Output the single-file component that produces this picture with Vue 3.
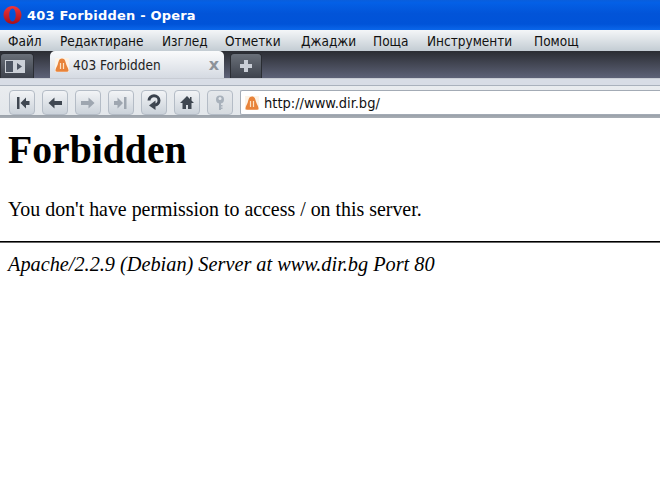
<script setup>
const menus = [
  { label: 'Файл', width: 52 },
  { label: 'Редактиране', width: 102 },
  { label: 'Изглед', width: 63 },
  { label: 'Отметки', width: 76 },
  { label: 'Джаджи', width: 72 },
  { label: 'Поща', width: 54 },
  { label: 'Инструменти', width: 107 },
  { label: 'Помощ', width: 70 },
];

const navButtons = [
  { name: 'rewind', path: 'M6 5h2.500v12H6zM9.500 11 15 5.500V9h3.500v4H15v3.500z', off: false },
  { name: 'back', path: 'M4.500 11 10.500 5.500V9H18v4h-7.500v3.500z', off: false },
  { name: 'forward', path: 'M17.500 11 11.500 5.500V9H4v4h7.500v3.500z', off: true },
  { name: 'fastforward', path: 'M14 5h2.500v12H14zM13 11 7.500 5.500V9H4v4h3.500v3.500z', off: true },
];

const warnDome = 'M7 .5C4 .5 3.600 3.500 2.800 6.300 2 8.800 .5 10.300 .5 12.500c0 .8.500 1.200 1.200 1.200h10.600c.7 0 1.200-.4 1.200-1.200 0-2.200-1.500-3.700-2.300-6.200C10.400 3.500 10 .5 7 .5z';
</script>

<template>
  <div class="browser">
    <header class="title-bar">
      <svg class="logo" width="22" height="22" viewBox="0 0 22 22">
        <defs>
          <linearGradient id="opera-red" x1="0" y1="0" x2="0" y2="1">
            <stop offset="0" stop-color="#f0353a" />
            <stop offset="1" stop-color="#a80f18" />
          </linearGradient>
        </defs>
        <path fill-rule="evenodd" fill="url(#opera-red)" d="M9.500 2C4.500 2 .5 6 .5 11s4 9 9 9 9-4 9-9-4-9-9-9zm0 2.500c2 0 3.200 3 3.200 6.500s-1.200 6.500-3.200 6.500S6.300 14.500 6.300 11s1.200-6.500 3.200-6.500z" />
      </svg>
      <span class="title-text">403 Forbidden - Opera</span>
    </header>

    <nav class="menu-bar">
      <span v-for="item in menus" :key="item.label" class="menu-item" :style="{ width: item.width + 'px' }">{{ item.label }}</span>
    </nav>

    <div class="tab-bar">
      <button class="tab-dark panel-btn">
        <svg width="20" height="13" viewBox="0 0 20 13">
          <rect width="20" height="13" fill="#ccd1d8" />
          <rect x="1" y="1" width="7" height="11" fill="#4d5562" />
          <path d="M12 3 17 6.500 12 10z" fill="#4d5562" />
        </svg>
      </button>
      <div class="tab">
        <svg width="14" height="14" viewBox="0 0 14 14">
          <rect width="14" height="14" fill="#fdf3e6" />
          <path :d="warnDome" fill="#e8833a" />
          <path d="M5.500 5v6M8.500 5v6" stroke="#fde3c4" stroke-width="1.200" />
        </svg>
        <span class="tab-label">403 Forbidden</span>
        <span class="tab-close">x</span>
      </div>
      <button class="tab-dark new-tab">
        <svg width="14" height="14" viewBox="0 0 14 14">
          <path d="M5 1h4v4h4v4H9v4H5V9H1V5h4z" fill="#c9ced6" />
        </svg>
      </button>
    </div>

    <div class="tool-bar">
      <button v-for="btn in navButtons" :key="btn.name" class="nav-btn" :class="{ off: btn.off }">
        <svg width="22" height="22" viewBox="0 0 22 22"><path :d="btn.path" /></svg>
      </button>
      <button class="nav-btn reload">
        <svg width="22" height="22" viewBox="0 0 22 22">
          <path class="ring" d="M6 8.500C6 5.500 8.500 3.800 11 3.800s5 1.700 5 4.700c0 2.500-2 4.300-4 4.500" />
          <path d="M12.500 8.500v9.500L6 13.500z" />
        </svg>
      </button>
      <button class="nav-btn home">
        <svg width="22" height="22" viewBox="0 0 22 22">
          <path d="M11 4 4 11h2.500v6H10v-4h2v4h3.500v-6H18l-2.500-2.500V5H14v2z" />
        </svg>
      </button>
      <button class="nav-btn key">
        <svg width="22" height="22" viewBox="0 0 22 22">
          <circle cx="11" cy="7.500" r="4" fill="#a8b1bb" />
          <circle cx="11" cy="6.500" r="1.500" fill="#e4e8ec" />
          <path d="M10 10h2v8h-2zM12 13h1.500v1.500H12zM12 15.500h1.500V17H12z" />
        </svg>
      </button>
      <div class="address">
        <svg width="14" height="14" viewBox="0 0 14 14">
          <rect width="14" height="14" fill="#fdf3e6" />
          <path :d="warnDome" fill="#e8833a" />
          <path d="M5.500 5v6M8.500 5v6" stroke="#fde3c4" stroke-width="1.200" />
        </svg>
        <span class="url">http://www.dir.bg/</span>
      </div>
    </div>

    <main class="page">
      <h1>Forbidden</h1>
      <p>You don't have permission to access / on this server.</p>
      <hr />
      <address>Apache/2.2.9 (Debian) Server at www.dir.bg Port 80</address>
    </main>
  </div>
</template>

<style>
html, body {
  margin: 0;
  background: #fff;
  overflow: hidden;
}
</style>

<style scoped>
.browser {
  width: 660px;
  height: 496px;
  overflow: hidden;
  background: #fff;
  display: flex;
  flex-direction: column;
}

.title-bar {
  height: 30px;
  flex: none;
  box-sizing: border-box;
  padding-left: 3px;
  display: flex;
  align-items: center;
  gap: 2px;
  background: linear-gradient(#0a5edc 0, #0460e6 8%, #0254d8 45%, #0053d8 80%, #0a66ea 100%);
}

.title-text {
  color: #fff;
  font: bold 13px "DejaVu Sans", sans-serif;
  letter-spacing: 0.2px;
}

.menu-bar {
  height: 21px;
  flex: none;
  box-sizing: border-box;
  padding-left: 8px;
  display: flex;
  align-items: center;
  background: linear-gradient(#f4f6f8, #c3ccd3);
}

.menu-item {
  font: 13.500px "DejaVu Sans Condensed", "DejaVu Sans", sans-serif;
  font-stretch: condensed;
  color: #111;
  white-space: nowrap;
}

.tab-bar {
  height: 28px;
  flex: none;
  box-sizing: border-box;
  display: flex;
  align-items: flex-end;
  background: linear-gradient(#2b2d33, #5d6277);
  border-bottom: 1px solid #c8ccd4;
}

.tab-dark {
  height: 25px;
  padding: 0;
  border: 1px solid #2a2d33;
  border-bottom: 0;
  border-radius: 4px 4px 0 0;
  background: linear-gradient(#6a7079, #3d424c);
  display: flex;
  align-items: center;
  justify-content: center;
}

.panel-btn {
  width: 34px;
  margin-right: 16px;
  padding-right: 4px;
}

.new-tab {
  width: 32px;
  margin-left: 6px;
}

.tab {
  width: 174px;
  height: 27px;
  box-sizing: border-box;
  padding: 0 5px 0 5px;
  display: flex;
  align-items: center;
  gap: 4px;
  border-radius: 5px 5px 0 0;
  background: linear-gradient(#fafbfc, #d5dae2);
}

.tab-label {
  flex: 1;
  font: 13.500px "DejaVu Sans Condensed", "DejaVu Sans", sans-serif;
  font-stretch: condensed;
  color: #222;
}

.tab-close {
  font: bold 16px "DejaVu Sans", sans-serif;
  color: #8d9299;
  line-height: 1;
}

.tool-bar {
  height: 39px;
  flex: none;
  box-sizing: border-box;
  padding: 11px 0 0 9px;
  display: flex;
  align-items: flex-start;
  gap: 7px;
  background: linear-gradient(#d8dde6 0, #d8dde6 6px, #aab2bd 6px, #aab2bd 7px, #e9ecef 7px, #e3e7eb 36px, #9aa1a9 36px, #a8aeb5 39px);
}

.nav-btn {
  width: 26px;
  height: 25px;
  padding: 0;
  box-sizing: border-box;
  border: 1px solid #b4bcc6;
  border-radius: 4px;
  background: linear-gradient(#f2f4f6, #cbd2da);
  display: flex;
  align-items: center;
  justify-content: center;
}

.nav-btn path {
  fill: #3f4751;
}

.nav-btn.off path {
  fill: #9ea6b0;
}

.reload path.ring {
  fill: none;
  stroke: #39414c;
  stroke-width: 3;
}

.nav-btn.key path {
  fill: #a8b1bb;
}

.nav-btn.key {
  background: linear-gradient(#e6e9ec, #d6dbe0);
}

.address {
  flex: 1;
  height: 25px;
  box-sizing: border-box;
  padding-left: 4px;
  display: flex;
  align-items: center;
  gap: 5px;
  background: #fff;
  border: 1px solid #a3abb5;
  border-right: 0;
  border-radius: 2px 0 0 2px;
}

.url {
  font: 14.500px "DejaVu Sans Condensed", "DejaVu Sans", sans-serif;
  font-stretch: condensed;
  color: #111;
}

.page {
  padding: 0 8px;
  font-family: "Liberation Serif", serif;
  color: #000;
}

h1 {
  margin: 9px 0 0;
  font-size: 39.700px;
  line-height: 46px;
  font-weight: bold;
}

p {
  margin: 25px 0 0;
  font-size: 19.900px;
  line-height: 23px;
}

hr {
  margin: 20px -8px 0;
  border: 0;
  border-top: 1px solid #000;
  border-bottom: 1px solid #666;
  height: 0;
}

address {
  margin-top: 10px;
  font-size: 20.300px;
  line-height: 23px;
  font-style: italic;
}
</style>
